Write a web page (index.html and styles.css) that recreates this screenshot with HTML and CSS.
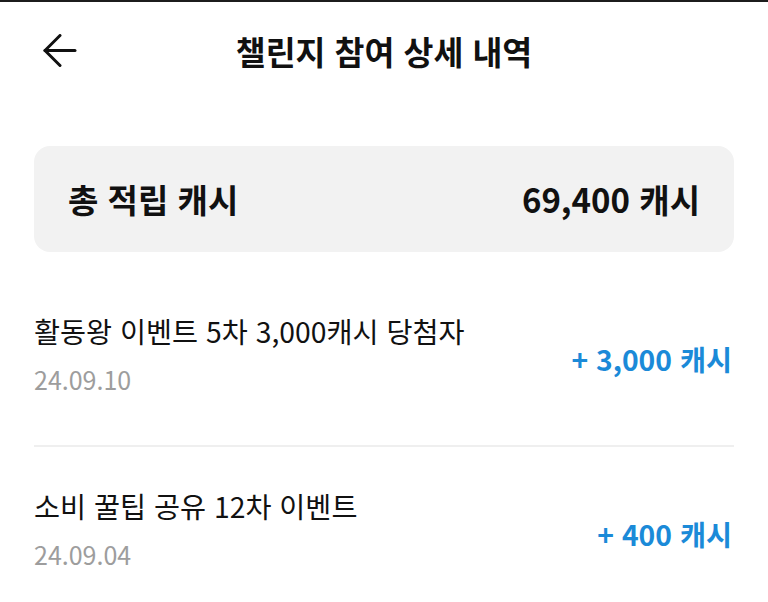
FILE: index.html
```html
<!DOCTYPE html>
<html lang="ko">
<head>
<meta charset="utf-8">
<link rel="stylesheet" href="styles.css">
</head>
<body>
<div class="page">
  <header class="topbar">
    <button class="back" aria-label="뒤로">
      <svg width="34" height="34" viewBox="0 0 34 34" fill="none" stroke="#111" stroke-width="3" stroke-linecap="round" stroke-linejoin="round">
        <path d="M32 16.5H2"/>
        <path d="M17 1.5L2 16.5L17 31.5"/>
      </svg>
    </button>
    <h1 class="title">챌린지 참여 상세 내역</h1>
    <span></span>
  </header>

  <section class="summary">
    <span class="summary-label">총 적립 캐시</span>
    <span class="summary-value">69,400 캐시</span>
  </section>

  <ul class="history">
    <li class="item">
      <div class="item-info">
        <div class="item-name">활동왕 이벤트 5차 3,000캐시 당첨자</div>
        <div class="item-date">24.09.10</div>
      </div>
      <div class="item-amount">+ 3,000 캐시</div>
    </li>
    <li class="item">
      <div class="item-info">
        <div class="item-name">소비 꿀팁 공유 12차 이벤트</div>
        <div class="item-date">24.09.04</div>
      </div>
      <div class="item-amount">+ 400 캐시</div>
    </li>
  </ul>
</div>
</body>
</html>
```

FILE: styles.css
```css
* { box-sizing: border-box; }
html, body { margin: 0; padding: 0; background: #fff; }
body {
  border-top: 2px solid #1c1c1c;
  font-family: "Noto Sans CJK KR", "Noto Sans", sans-serif;
  color: #111;
  overflow: hidden;
}
.page {
  padding: 0 34px;
}
.topbar {
  height: 98px;
  display: grid;
  grid-template-columns: 1fr auto 1fr;
  align-items: center;
}
.back {
  justify-self: start;
  margin-left: 9px;
  padding: 0;
  border: 0;
  background: none;
  display: flex;
  width: 34px;
  height: 34px;
}
.title {
  margin: 0;
  font-size: 32.5px;
  font-weight: 700;
  line-height: 1;
  letter-spacing: 0;
}
.summary {
  margin-top: 46px;
  height: 106px;
  background: #f2f2f2;
  border-radius: 16px;
  padding: 0 34px;
  display: flex;
  justify-content: space-between;
  align-items: center;
  font-size: 33px;
  font-weight: 700;
  letter-spacing: 0;
}
.history {
  list-style: none;
  margin: 0;
  padding: 0;
  margin-top: 20px;
}
.item {
  display: flex;
  justify-content: space-between;
  align-items: center;
  padding: 41px 2px 51px 0;
}
.item + .item {
  border-top: 2px solid #efefef;
  padding-top: 41px;
}
.item-name {
  font-size: 28.3px;
  line-height: 36px;
  font-weight: 400;
  letter-spacing: 0;
}
.item-date {
  margin-top: 15px;
  font-size: 25px;
  line-height: 30px;
  color: #9d9d9d;
  letter-spacing: 0;
}
.item-amount {
  font-size: 28.3px;
  font-weight: 700;
  color: #1b8ad8;
  letter-spacing: 0;
  margin-top: 10px;
}
```
